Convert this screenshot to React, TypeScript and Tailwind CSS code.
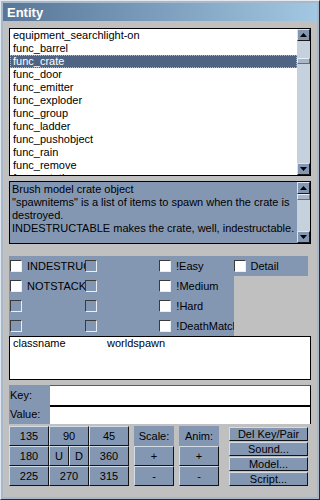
import React from "react";

const F = { fontFamily: '"Liberation Sans", Arial, sans-serif' };

function Arrow({ up }: { up?: boolean }) {
  return (
    <div className="h-[12px] w-[13px] shrink-0 bg-[#8497b2] border border-t-[#dbe4ee] border-l-[#dbe4ee] border-r-[#1a1a1a] border-b-[#1a1a1a] flex items-center justify-center">
      <svg width="7" height="4" viewBox="0 0 7 4">
        {up ? <polygon points="3.5,0 7,4 0,4" fill="#000" /> : <polygon points="0,0 7,0 3.5,4" fill="#000" />}
      </svg>
    </div>
  );
}

function ScrollBar({ thumbTop }: { thumbTop: number }) {
  return (
    <div className="w-[13px] shrink-0 bg-[#c5d1dd] flex flex-col">
      <Arrow up />
      <div className="flex-1 relative">
        <div
          className="absolute left-0 w-[13px] h-[6px] bg-[#a9b8c9] border border-t-[#e6edf4] border-l-[#e6edf4] border-r-[#5d6f86] border-b-[#5d6f86]"
          style={{ top: thumbTop }}
        />
      </div>
      <Arrow />
    </div>
  );
}

function Check({ white }: { white?: boolean }) {
  return (
    <div
      className={
        "w-[12px] h-[12px] shrink-0 border-t border-l border-t-[#3a3a3a] border-l-[#3a3a3a] border-r border-b border-r-[#e8eef4] border-b-[#e8eef4] " +
        (white ? "bg-white" : "bg-[#8497b2]")
      }
    />
  );
}

function Flag({ label, white }: { label?: string; white?: boolean }) {
  return (
    <div className="w-[75px] h-[20px] flex items-center overflow-hidden">
      <Check white={white} />
      {label ? <span className="ml-[5px] whitespace-nowrap text-[11px] text-black leading-none">{label}</span> : null}
    </div>
  );
}

function Btn({ children, className }: { children: React.ReactNode; className?: string }) {
  return (
    <div
      className={
        "flex items-center justify-center bg-[#8497b2] border border-t-[#d3dde8] border-l-[#d3dde8] border-r-[#141414] border-b-[#141414] text-[11px] text-black leading-none " +
        (className || "")
      }
    >
      {children}
    </div>
  );
}

const items = [
  "equipment_searchlight-on",
  "func_barrel",
  "func_crate",
  "func_door",
  "func_emitter",
  "func_exploder",
  "func_group",
  "func_ladder",
  "func_pushobject",
  "func_rain",
  "func_remove",
  "func_rotating",
];

export default function App() {
  return (
    <div style={F} className="w-[320px] h-[500px] border border-t-[#e2e9f0] border-l-[#e2e9f0] border-r-[#2c2c2c] border-b-[#2c2c2c] bg-[#a7b8ca]">
      <div className="w-full h-full border-2 border-[#a7b8ca] bg-[#c0c0c0] flex flex-col">
        {/* title bar */}
        <div className="h-[18px] shrink-0 bg-gradient-to-r from-[#587697] to-[#a3c8e3] flex items-center pl-[4px]">
          <span className="text-white font-bold text-[13px] leading-none">Entity</span>
        </div>
        <div className="flex flex-col px-[6px] pt-[7px]">
          {/* listbox */}
          <div className="h-[148px] border border-black bg-white flex">
            <div className="flex-1 overflow-hidden">
              {items.map((it) => (
                <div
                  key={it}
                  className={
                    "h-[13px] pl-[3px] text-[11px] leading-[13px] whitespace-nowrap " +
                    (it === "func_crate"
                      ? "bg-[#4f6483] text-white outline outline-1 outline-dotted outline-[#b8b8b8] -outline-offset-1"
                      : "text-black")
                  }
                >
                  {it}
                </div>
              ))}
            </div>
            <ScrollBar thumbTop={17} />
          </div>
          {/* description */}
          <div className="mt-[5px] h-[63px] border border-black bg-[#8497b2] flex">
            <div className="flex-1 pl-[2px] pt-[1px] text-[11px] leading-[13px] text-black whitespace-nowrap overflow-hidden">
              <div>Brush model crate object</div>
              <div>"spawnitems" is a list of items to spawn when the crate is</div>
              <div>destroyed.</div>
              <div>INDESTRUCTABLE makes the crate, well, indestructable.</div>
            </div>
            <ScrollBar thumbTop={0} />
          </div>
          {/* flags */}
          <div className="mt-[12px] flex flex-col">
            <div className="flex h-[20px] w-[299px] bg-[#8497b2] pl-[1px]">
              <Flag label="INDESTRUCTABLE" white />
              <Flag />
              <Flag label="!Easy" white />
              <Flag label="Detail" white />
            </div>
            <div className="flex h-[20px] w-[225px] bg-[#8497b2] pl-[1px]">
              <Flag label="NOTSTACKABLE" white />
              <Flag />
              <Flag label="!Medium" white />
            </div>
            <div className="flex h-[20px] w-[225px] bg-[#8497b2] pl-[1px]">
              <Flag />
              <Flag />
              <Flag label="!Hard" white />
            </div>
            <div className="flex h-[20px] w-[225px] bg-[#8497b2] pl-[1px]">
              <Flag />
              <Flag />
              <Flag label="!DeathMatch" white />
            </div>
          </div>
          {/* key/value list */}
          <div className="h-[44px] border border-black bg-white flex text-[11px] leading-[13px] text-black">
            <div className="w-[97px] pl-[3px]">classname</div>
            <div>worldspawn</div>
          </div>
          {/* key/value inputs */}
          <div className="mt-[5px] flex h-[39px]">
            <div className="w-[41px] bg-[#8497b2] flex flex-col text-[11px] text-black leading-none">
              <div className="h-[20px] flex items-center pl-[1px]">Key:</div>
              <div className="h-[19px] flex items-center pl-[1px]">Value:</div>
            </div>
            <div className="flex-1 flex flex-col">
              <div className="h-[20px] bg-white border-t border-r border-t-[#5a5a5a] border-r-black" />
              <div className="h-[19px] bg-white border-t-2 border-r border-t-black border-r-black" />
            </div>
          </div>
          {/* buttons */}
          <div className="mt-[2px] flex">
            <div className="grid grid-cols-[40px_20px_20px_40px] grid-rows-[20px_20px_20px] w-[120px]">
              <Btn>135</Btn>
              <Btn className="col-span-2">90</Btn>
              <Btn>45</Btn>
              <Btn>180</Btn>
              <Btn>U</Btn>
              <Btn>D</Btn>
              <Btn>360</Btn>
              <Btn>225</Btn>
              <Btn className="col-span-2">270</Btn>
              <Btn>315</Btn>
            </div>
            <div className="ml-[5px] w-[40px] flex flex-col">
              <div className="h-[20px] bg-[#8497b2] flex items-center justify-center text-[11px] text-black leading-none">Scale:</div>
              <Btn className="h-[20px]">+</Btn>
              <Btn className="h-[20px]">-</Btn>
            </div>
            <div className="ml-[5px] w-[40px] flex flex-col">
              <div className="h-[20px] bg-[#8497b2] flex items-center justify-center text-[11px] text-black leading-none">Anim:</div>
              <Btn className="h-[20px]">+</Btn>
              <Btn className="h-[20px]">-</Btn>
            </div>
            <div className="ml-[10px] w-[79px] flex flex-col pt-[1px] gap-[1px]">
              <Btn className="h-[14px]">Del Key/Pair</Btn>
              <Btn className="h-[14px]">Sound...</Btn>
              <Btn className="h-[14px]">Model...</Btn>
              <Btn className="h-[14px]">Script...</Btn>
            </div>
          </div>
        </div>
      </div>
    </div>
  );
}
